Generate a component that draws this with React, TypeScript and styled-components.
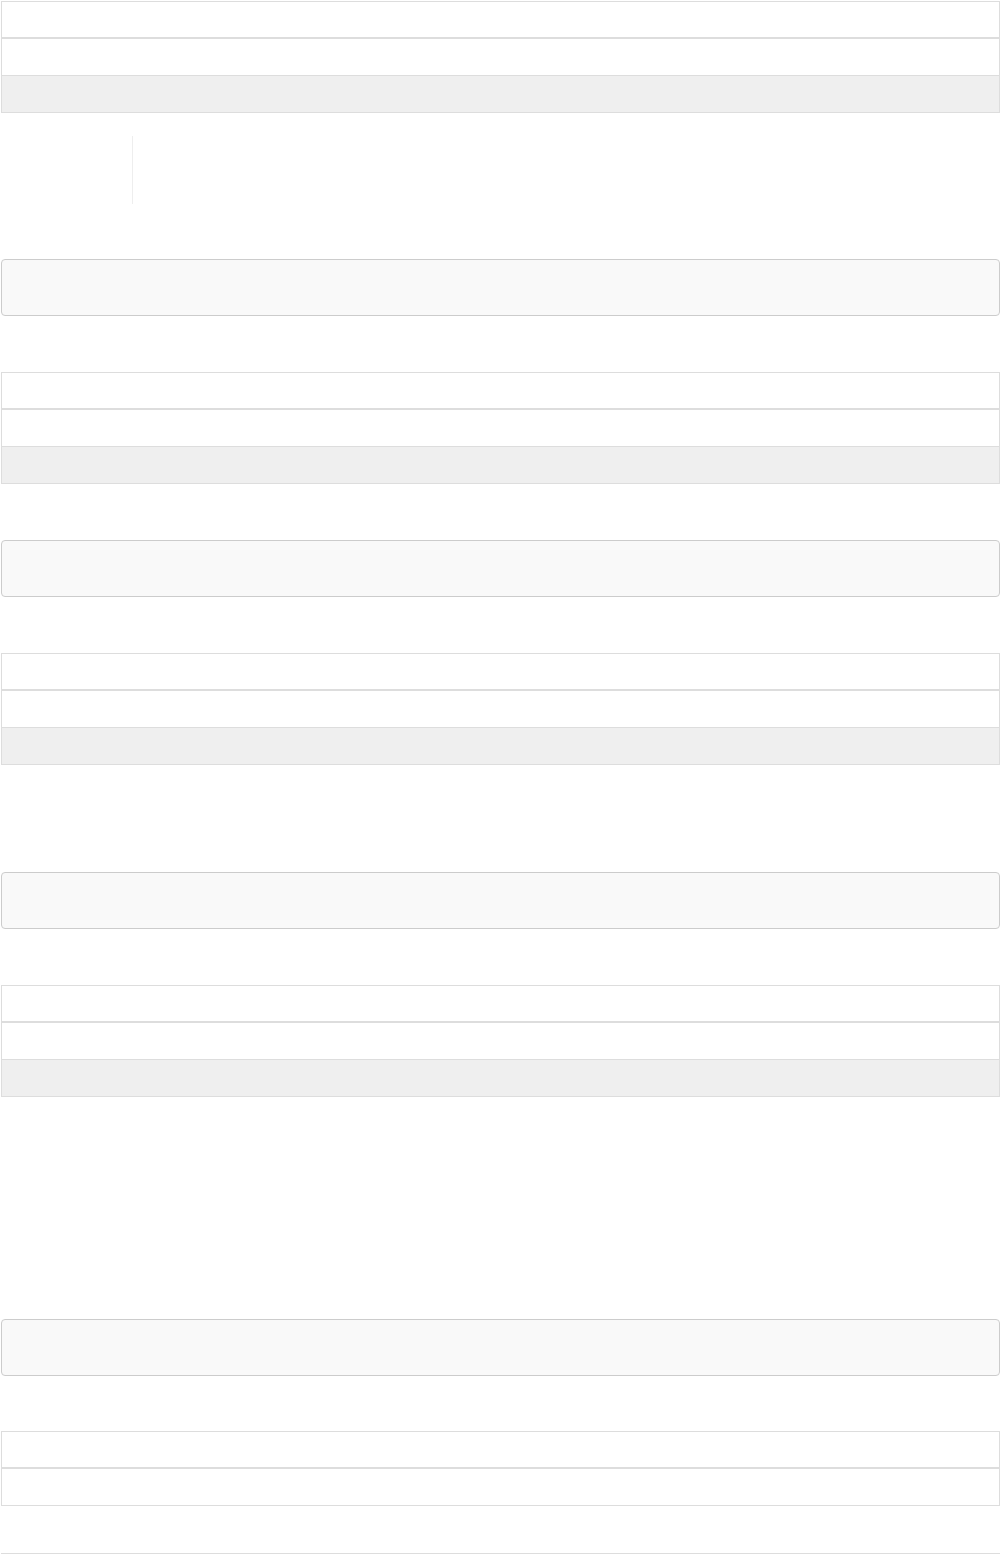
import * as React from "react";
import styled, { createGlobalStyle } from "styled-components";

const GlobalStyle = createGlobalStyle`
  html, body {
    margin: 0;
    padding: 0;
    background: #fff;
    font-family: "Liberation Sans", Arial, sans-serif;
    font-size: 14px;
    color: #333;
  }
`;

const Page = styled.div`
  padding: 1px 0 0 1px;
  display: flex;
  flex-direction: column;
`;

const Table = styled.table<{ $top?: number }>`
  width: 100%;
  border-collapse: collapse;
  border: 1px solid #ddd;
  margin-top: ${(p) => p.$top ?? 0}px;
`;

const Th = styled.th`
  height: 35px;
  padding: 0 8px;
  border: 1px solid #ddd;
  border-bottom: 2px solid #ddd;
  text-align: left;
  line-height: 20px;
`;

const Td = styled.td`
  height: 36px;
  padding: 0 8px;
  border: 1px solid #ddd;
  line-height: 20px;
`;

const Tr = styled.tr<{ $striped?: boolean }>`
  background: ${(p) => (p.$striped ? "#efefef" : "#fff")};
`;

const Quote = styled.blockquote`
  margin: 23px 0 0 131px;
  padding: 0 0 0 15px;
  height: 68px;
  border-left: 1px solid #eee;
`;

const Pre = styled.pre<{ $top: number }>`
  margin: ${(p) => p.$top}px 0 0 0;
  height: 55px;
  box-sizing: content-box;
  padding: 0;
  background: #f9f9f9;
  border: 1px solid #ccc;
  border-radius: 4px;
  font-family: "Liberation Mono", monospace;
`;

const DataTable = ({ top, rows }: { top?: number; rows: number }) => (
  <Table $top={top}>
    <thead>
      <tr>
        <Th>&nbsp;</Th>
      </tr>
    </thead>
    <tbody>
      {Array.from({ length: rows }).map((_, i) => (
        <Tr key={i} $striped={i % 2 === 1}>
          <Td>&nbsp;</Td>
        </Tr>
      ))}
    </tbody>
  </Table>
);

export default function App() {
  return (
    <>
      <GlobalStyle />
      <Page>
        <DataTable rows={2} />
        <Quote />
        <Pre $top={55} />
        <DataTable top={56} rows={2} />
        <Pre $top={56} />
        <DataTable top={56} rows={2} />
        <Pre $top={107} />
        <DataTable top={56} rows={2} />
        <Pre $top={222} />
        <DataTable top={55} rows={1} />
        <DataTable top={47} rows={2} />
      </Page>
    </>
  );
}
